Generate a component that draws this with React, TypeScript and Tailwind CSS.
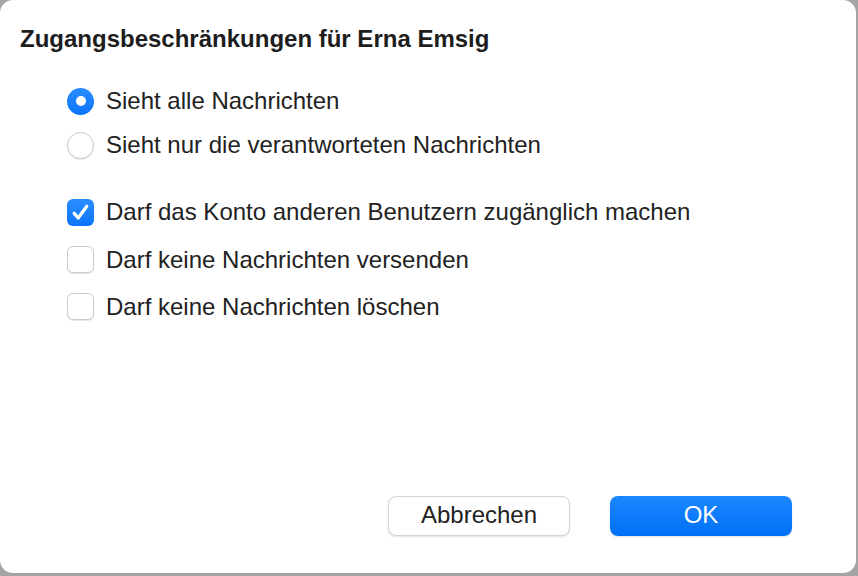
import { useState } from "react";

function Radio({ checked }: { checked: boolean }) {
  return checked ? (
    <span className="flex h-[27px] w-[27px] shrink-0 items-center justify-center rounded-full bg-gradient-to-b from-[#2a8dff] to-[#0a74fb]">
      <span className="h-[10px] w-[10px] rounded-full bg-white" />
    </span>
  ) : (
    <span className="h-[27px] w-[27px] shrink-0 rounded-full border border-[#c9c9c9] bg-white shadow-[0_1px_1px_rgba(0,0,0,0.1)]" />
  );
}

function Checkbox({ checked }: { checked: boolean }) {
  return checked ? (
    <span className="flex h-[27px] w-[27px] shrink-0 items-center justify-center rounded-[6px] bg-gradient-to-b from-[#2a8dff] to-[#0a74fb]">
      <svg width="21" height="21" viewBox="0 0 20 20" fill="none">
        <path d="M4 10.8l3.8 4.4L16 4" stroke="white" strokeWidth="3.1" strokeLinecap="round" strokeLinejoin="round" />
      </svg>
    </span>
  ) : (
    <span className="h-[27px] w-[27px] shrink-0 rounded-[6px] border border-[#cbcbcb] bg-white shadow-[0_1px_1px_rgba(0,0,0,0.1)]" />
  );
}

export default function App() {
  const [view, setView] = useState(0);
  const [perms, setPerms] = useState([true, false, false]);

  const views = ["Sieht alle Nachrichten", "Sieht nur die verantworteten Nachrichten"];
  const permLabels = [
    "Darf das Konto anderen Benutzern zugänglich machen",
    "Darf keine Nachrichten versenden",
    "Darf keine Nachrichten löschen",
  ];
  const rowHeights = ["h-[48px]", "h-[47px]", "h-[47px]"];

  return (
    <div className="h-[576px] w-[858px] bg-[#a4a4a4] font-['Liberation_Sans',Arial,sans-serif] text-[#222]">
      <div className="flex h-[573px] w-[856px] flex-col rounded-[13px] bg-white">
        <h1 className="pl-[20px] pt-[25px] text-[24px] font-bold leading-[28px] text-[#1d1d1d]">
          Zugangsbeschränkungen für Erna Emsig
        </h1>

        <div className="mt-[26px] flex flex-col pl-[67px]">
          {views.map((label, i) => (
            <div
              key={label}
              className="flex h-[44px] cursor-default items-center gap-[12px]"
              onClick={() => setView(i)}
            >
              <Radio checked={view === i} />
              <span className="text-[24px] leading-[28px]">{label}</span>
            </div>
          ))}
        </div>

        <div className="mt-[21px] flex flex-col pl-[67px]">
          {permLabels.map((label, i) => (
            <div
              key={label}
              className={`flex ${rowHeights[i]} cursor-default items-center gap-[12px]`}
              onClick={() => setPerms((prev) => prev.map((p, j) => (j === i ? !p : p)))}
            >
              <Checkbox checked={perms[i]} />
              <span className="text-[24px] leading-[28px]">{label}</span>
            </div>
          ))}
        </div>

        <div className="mt-auto flex justify-end gap-[40px] pb-[37px] pr-[64px]">
          <button className="flex h-[40px] w-[182px] items-center justify-center rounded-[8px] border border-[#d4d4d4] bg-white pb-[3px] text-[24px] leading-[28px] text-[#222] shadow-[0_1px_2px_rgba(0,0,0,0.12)]">
            Abbrechen
          </button>
          <button className="flex h-[40px] w-[182px] items-center justify-center rounded-[8px] bg-gradient-to-b from-[#1a86ff] to-[#0070f5] pb-[3px] text-[24px] leading-[28px] text-white shadow-[0_1px_2px_rgba(0,0,0,0.12)]">
            OK
          </button>
        </div>
      </div>
    </div>
  );
}
